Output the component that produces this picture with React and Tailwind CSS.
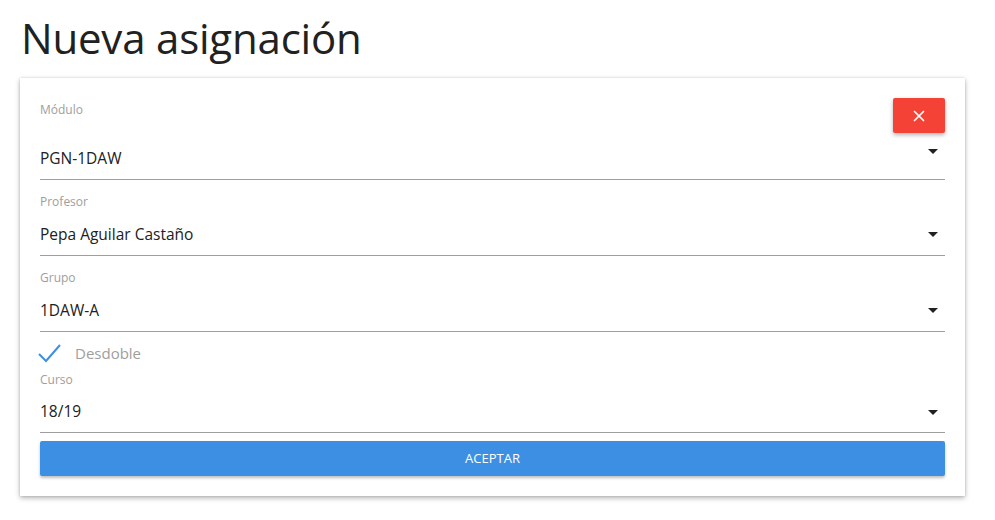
import { X } from 'lucide-react';

const FIELDS = [
  { label: 'Profesor', value: 'Pepa Aguilar Castaño' },
  { label: 'Grupo', value: '1DAW-A' },
];

function Arrow({ className = '' }) {
  return (
    <svg width="10" height="5" viewBox="0 0 10 5" className={className}>
      <path d="M0 0 L10 0 L5 5 Z" fill="#212121" />
    </svg>
  );
}

function SelectField({ label, value, first }) {
  return (
    <div className={`border-b border-[#9e9e9e] pb-[8px] ${first ? 'pt-[4px]' : 'pt-[14px]'}`}>
      <div className="text-[12px] leading-[16px] text-[#9e9e9e]">{label}</div>
      <div className={`flex items-center justify-between h-[24px] ${first ? 'mt-[29px]' : 'mt-[13px]'}`}>
        <span className="text-[15.5px] text-[#212121]">{value}</span>
        <Arrow className={first ? 'mr-[7px] -translate-y-[8px]' : 'mr-[7px] -translate-y-[1px]'} />
      </div>
    </div>
  );
}

export default function App() {
  return (
    <div className="bg-white min-h-[520px] px-5 pt-[9px]" style={{ fontFamily: '"Open Sans", "Noto Sans", sans-serif' }}>
      <h1 className="text-[42px] leading-[57px] text-[#212121] ml-[1px] mb-[12px] tracking-[-0.2px]">Nueva asignación</h1>

      <div className="relative bg-white shadow-[0_2px_5px_rgba(0,0,0,0.3),0_0_2px_rgba(0,0,0,0.12)] px-5 pt-5 pb-[20px] w-[945px]">
        <button className="absolute top-5 right-5 w-[52px] h-[35px] rounded-[2px] bg-[#f44336] flex items-center justify-center shadow-[0_2px_4px_rgba(0,0,0,0.3)]">
          <X size={18} color="white" strokeWidth={2.2} />
        </button>

        <SelectField label="Módulo" value="PGN-1DAW" first />
        {FIELDS.map(f => <SelectField key={f.label} label={f.label} value={f.value} />)}

        {/* Desdoble */}
        <div className="flex items-center h-[37px] pt-[6px]">
          <svg width="24" height="20" viewBox="0 0 24 20" className="-ml-[2px]">
            <path d="M1 10 L8 17 L22 1" fill="none" stroke="#3d8fe3" strokeWidth="2" />
          </svg>
          <span className="ml-[13px] text-[15px] text-[#9e9e9e]">Desdoble</span>
        </div>

        <div className="border-b border-[#9e9e9e] pb-[8px] pt-[3px]">
          <div className="text-[12px] leading-[16px] text-[#9e9e9e]">Curso</div>
          <div className="flex items-center justify-between h-[24px] mt-[12px]">
            <span className="text-[15.5px] text-[#212121]">18/19</span>
            <Arrow className="mr-[7px]" />
          </div>
        </div>

        <button className="mt-[8px] w-full h-[35px] bg-[#3d8fe3] text-white text-[13px] rounded-[2px] shadow-[0_2px_3px_rgba(0,0,0,0.25)]">
          ACEPTAR
        </button>
      </div>
    </div>
  );
}
